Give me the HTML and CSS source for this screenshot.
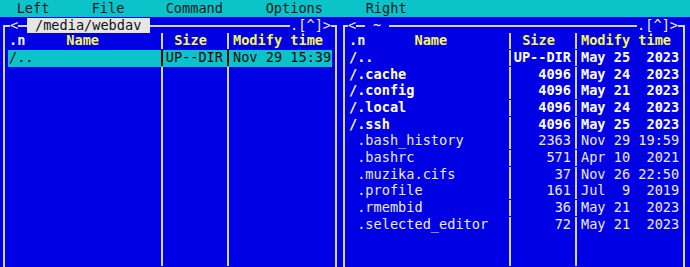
FILE: index.html
```html
<html>
<head>
    <title>mc - /media/webdav</title>
    <meta name="viewport" content="width=device-width, initial-scale=1" />
    <link rel="stylesheet" href="styles.css">
</head>
<body>
<div class="menubar">
    <span class="menu-item w-left">Left</span>
    <span class="menu-item w-file">File</span>
    <span class="menu-item w-command">Command</span>
    <span class="menu-item w-options">Options</span>
    <span class="menu-item">Right</span>
</div>
<div class="panels">
    <section class="panel panel-left">
        <div class="title">
            <span class="corner corner-l"></span>
            <span class="glyph">&lt;</span>
            <span class="dash dash-short"></span>
            <span class="path active"> /media/webdav </span>
            <span class="dash dash-fill"></span>
            <span class="glyph">.[^]&gt;</span>
            <span class="corner corner-r"></span>
        </div>
        <div class="listing">
            <div class="row head">
                <span class="c-name"><b class="sort">.n</b>     <b>Name</b></span>
                <span class="c-size"><b> Size  </b></span>
                <span class="c-time"><b>Modify time</b></span>
            </div>
            <div class="row sel">
                <span class="c-name">/..</span>
                <span class="c-size">UP--DIR</span>
                <span class="c-time">Nov 29 15:39</span>
            </div>
            <div class="row fill">
                <span class="c-name"></span>
                <span class="c-size"></span>
                <span class="c-time"></span>
            </div>
        </div>
    </section>

    <section class="panel panel-right">
        <div class="title">
            <span class="corner corner-l"></span>
            <span class="glyph">&lt;</span>
            <span class="dash dash-short"></span>
            <span class="path"> ~ </span>
            <span class="dash dash-fill"></span>
            <span class="glyph">.[^]&gt;</span>
            <span class="corner corner-r"></span>
        </div>
        <div class="listing">
            <div class="row head">
                <span class="c-name"><b class="sort">.n</b>      <b>Name</b></span>
                <span class="c-size"><b> Size  </b></span>
                <span class="c-time"><b>Modify time</b></span>
            </div>
            <div class="row dir">
                <span class="c-name">/..</span>
                <span class="c-size">UP--DIR</span>
                <span class="c-time">May 25  2023</span>
            </div>
            <div class="row dir">
                <span class="c-name">/.cache</span>
                <span class="c-size">4096</span>
                <span class="c-time">May 24  2023</span>
            </div>
            <div class="row dir">
                <span class="c-name">/.config</span>
                <span class="c-size">4096</span>
                <span class="c-time">May 21  2023</span>
            </div>
            <div class="row dir">
                <span class="c-name">/.local</span>
                <span class="c-size">4096</span>
                <span class="c-time">May 24  2023</span>
            </div>
            <div class="row dir">
                <span class="c-name">/.ssh</span>
                <span class="c-size">4096</span>
                <span class="c-time">May 25  2023</span>
            </div>
            <div class="row">
                <span class="c-name"> .bash_history</span>
                <span class="c-size">2363</span>
                <span class="c-time">Nov 29 19:59</span>
            </div>
            <div class="row">
                <span class="c-name"> .bashrc</span>
                <span class="c-size">571</span>
                <span class="c-time">Apr 10  2021</span>
            </div>
            <div class="row">
                <span class="c-name"> .muzika.cifs</span>
                <span class="c-size">37</span>
                <span class="c-time">Nov 26 22:50</span>
            </div>
            <div class="row">
                <span class="c-name"> .profile</span>
                <span class="c-size">161</span>
                <span class="c-time">Jul  9  2019</span>
            </div>
            <div class="row">
                <span class="c-name"> .rmembid</span>
                <span class="c-size">36</span>
                <span class="c-time">May 21  2023</span>
            </div>
            <div class="row">
                <span class="c-name"> .selected_editor</span>
                <span class="c-size">72</span>
                <span class="c-time">May 21  2023</span>
            </div>
            <div class="row fill">
                <span class="c-name"></span>
                <span class="c-size"></span>
                <span class="c-time"></span>
            </div>
        </div>
    </section>
</div>
</body>
</html>
```

FILE: styles.css
```css
html, body {
    height: 100%;
}

body {
    margin: 0;
    display: flex;
    flex-direction: column;
    background: #0000e4;
    color: #ececec;
    font-family: "DejaVu Sans Mono", monospace;
    font-size: 13.6px;
    line-height: 16.67px;
    overflow: hidden;
}

b {
    font-weight: bold;
}

/* top menu */
.menubar {
    display: flex;
    height: 16.67px;
    padding-left: 16.7px;
    background: #0cc3ca;
    color: #0c1a1e;
    white-space: pre;
}

.w-left { width: 75px; }
.w-file { width: 74px; }
.w-command { width: 100px; }
.w-options { width: 100px; }

/* panels */
.panels {
    flex: 1;
    display: flex;
    gap: 6px;
    padding-left: 3px;
    min-height: 0;
}

.panel {
    display: flex;
    flex-direction: column;
}

.panel-left { width: 334px; }
.panel-right { width: 342px; }

.title {
    display: flex;
    height: 16.67px;
    white-space: pre;
    color: #f2f2f2;
}

.corner {
    margin-top: 8px;
    border-top: 2px solid #d4d4f2;
}

.corner-l {
    border-left: 2px solid #d4d4f2;
}

.corner-r {
    border-right: 2px solid #d4d4f2;
}

.panel-left .corner-l { width: 5px; }
.panel-left .corner-r { width: 4px; }
.panel-right .corner-l { width: 3px; }
.panel-right .corner-r { width: 5px; }

.dash {
    margin-top: 8px;
    border-top: 2px solid #d4d4f2;
}

.dash-short { width: 8.6px; }
.dash-fill { flex: 1; }

.path.active {
    margin-top: 1.67px;
    height: 15px;
    line-height: 15px;
    background: #e6e6e6;
    color: #111;
}

.listing {
    flex: 1;
    display: flex;
    flex-direction: column;
    padding: 0 3px;
    border-left: 2px solid #d4d4f2;
    border-right: 2px solid #d4d4f2;
}

.row {
    display: grid;
    height: 16px;
    padding-bottom: 0.67px;
    white-space: pre;
}

.panel-left .row { grid-template-columns: 155px 66px 103px; }
.panel-right .row { grid-template-columns: 163px 66px 103px; }

.row.fill {
    flex: 1;
    height: auto;
}

.c-name {
    padding-left: 1px;
    line-height: 15px;
    border-right: 2px solid #d4d4f2;
}

.c-size, .c-time {
    line-height: 15px;
}

.c-size {
    padding-right: 4px;
    text-align: right;
    border-right: 2px solid #d4d4f2;
}

.c-time {
    padding-left: 4px;
}

.head {
    color: #f6f658;
}

.head .c-size {
    text-align: left;
    padding-left: 3px;
}

.head .sort {
    color: #f4f4f4;
}

.dir {
    color: #ffffff;
    font-weight: bold;
}

.row.sel {
    background: #0cc3ca;
    color: #0a0a0a;
}

.row.sel .c-name,
.row.sel .c-size {
    border-color: #0a0a0a;
}
```
